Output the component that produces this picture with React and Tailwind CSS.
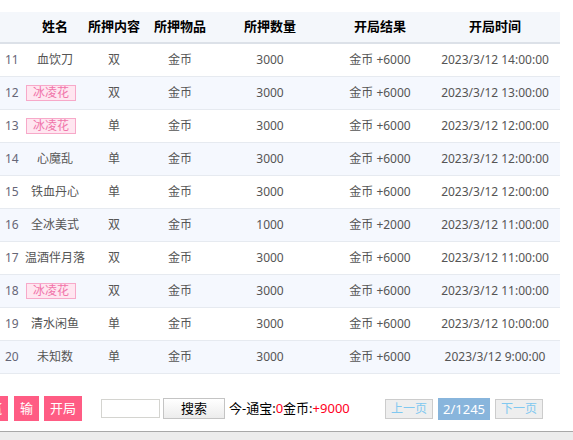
import React from 'react';

const rows = [
  { n: 11, name: '血饮刀', c: '双', item: '金币', amt: 3000, res: '+6000', time: '2023/3/12 14:00:00' },
  { n: 12, name: '冰凌花', tag: true, c: '双', item: '金币', amt: 3000, res: '+6000', time: '2023/3/12 13:00:00' },
  { n: 13, name: '冰凌花', tag: true, c: '单', item: '金币', amt: 3000, res: '+6000', time: '2023/3/12 12:00:00' },
  { n: 14, name: '心魔乱', c: '单', item: '金币', amt: 3000, res: '+6000', time: '2023/3/12 12:00:00' },
  { n: 15, name: '铁血丹心', c: '单', item: '金币', amt: 3000, res: '+6000', time: '2023/3/12 12:00:00' },
  { n: 16, name: '全冰美式', c: '双', item: '金币', amt: 1000, res: '+2000', time: '2023/3/12 11:00:00' },
  { n: 17, name: '温酒伴月落', c: '双', item: '金币', amt: 3000, res: '+6000', time: '2023/3/12 11:00:00' },
  { n: 18, name: '冰凌花', tag: true, c: '双', item: '金币', amt: 3000, res: '+6000', time: '2023/3/12 11:00:00' },
  { n: 19, name: '清水闲鱼', c: '单', item: '金币', amt: 3000, res: '+6000', time: '2023/3/12 10:00:00' },
  { n: 20, name: '未知数', c: '单', item: '金币', amt: 3000, res: '+6000', time: '2023/3/12 9:00:00' },
];

// 列宽
const cols = ['w-[24px] pl-[5px] text-left', 'w-[62px] text-center', 'w-[56px] text-center', 'w-[76px] text-center', 'w-[104px] text-center', 'w-[116px] text-center', 'w-[114px] text-center'];

const font = { fontFamily: '"Noto Sans", "Noto Sans CJK SC", sans-serif' };

export default function App() {
  return (
    <div className="w-[573px] h-[440px] bg-white overflow-hidden flex flex-col" style={font}>
      <div className="w-[560px] mt-[12px]">
        {/* 表头 */}
        <div className="flex items-center h-[32px] bg-[#f4f7fb] border-b-2 border-[#dce1e8] text-[13px] font-bold text-black">
          {['', '姓名', '所押内容', '所押物品', '所押数量', '开局结果', '开局时间'].map((h, i) => (
            <div key={i} className={cols[i]}>{h}</div>
          ))}
        </div>
        {rows.map((r, idx) => (
          <div
            key={r.n}
            className={`flex items-center h-[33px] border-b border-[#e6eaf0] text-[12px] text-[#555] ${idx % 2 === 1 ? 'bg-[#f5f8fe]' : 'bg-white'}`}
          >
            <div className={`${cols[0]} text-[#667]`}>{r.n}</div>
            <div className={`${cols[1]} flex justify-center`}>
              {r.tag ? (
                <span className="mr-[8px] w-[50px] h-[16px] leading-[14px] border border-[#f7a9c9] bg-[#ffe6f0] text-[#f074aa] text-center">
                  {r.name}
                </span>
              ) : (
                <span>{r.name}</span>
              )}
            </div>
            <div className={cols[2]}>{r.c}</div>
            <div className={cols[3]}>{r.item}</div>
            <div className={cols[4]}>{r.amt}</div>
            <div className={cols[5]}>金币 {r.res}</div>
            <div className={cols[6]}>{r.time}</div>
          </div>
        ))}
      </div>

      {/* 底部操作栏 */}
      <div className="flex items-center h-[25px] mt-[22px]">
        <button className="ml-[-17px] w-[25px] h-[25px] bg-[#ff5c84] text-white text-[13px]">赢</button>
        <button className="ml-[6px] w-[25px] h-[25px] bg-[#ff5c84] text-white text-[13px]">输</button>
        <button className="ml-[5px] w-[38px] h-[25px] bg-[#ff5c84] text-white text-[13px]">开局</button>
        <input className="ml-[19px] w-[59px] h-[19px] border border-[#d4d4d0] bg-white outline-none" />
        <button className="ml-[3px] w-[62px] h-[21px] border border-[#c4c4c4] bg-gradient-to-b from-white to-[#ececec] text-[13px] text-black leading-[19px]">
          搜索
        </button>
        <div className="ml-[4px] text-[13px] text-black whitespace-nowrap">
          今-通宝:<span className="text-[#ff0022]">0</span>金币:<span className="text-[#ff0022]">+9000</span>
        </div>
        <div className="ml-auto mr-[30px] flex items-center gap-[5px]">
          <span className="w-[48px] h-[20px] leading-[18px] border border-[#cccccc] bg-[#eeeeee] text-[#80c8f0] text-[12px] text-center">上一页</span>
          <span className="w-[52px] h-[22px] leading-[22px] bg-[#88b5dc] text-white text-[13px] text-center">2/1245</span>
          <span className="w-[48px] h-[20px] leading-[18px] border border-[#cccccc] bg-[#eeeeee] text-[#80c8f0] text-[12px] text-center">下一页</span>
        </div>
      </div>

      <div className="mt-[10px] flex-1 border-t border-[#a8a8a8] bg-[#ececec]" />
    </div>
  );
}
